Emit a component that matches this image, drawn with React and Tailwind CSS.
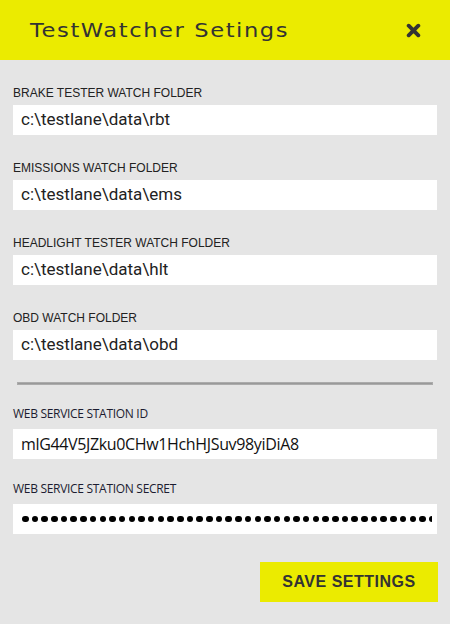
import React from "react";

const folders = [
  ["BRAKE TESTER WATCH FOLDER", "c:\\testlane\\data\\rbt"],
  ["EMISSIONS WATCH FOLDER", "c:\\testlane\\data\\ems"],
  ["HEADLIGHT TESTER WATCH FOLDER", "c:\\testlane\\data\\hlt"],
  ["OBD WATCH FOLDER", "c:\\testlane\\data\\obd"],
];

export default function App() {
  const dots = Array.from({ length: 48 });
  return (
    <div className="w-[450px] h-[624px] bg-[#e5e5e5] overflow-hidden">
      <div className="h-[60px] bg-[#ebeb00] flex items-center justify-between pl-[30px] pr-[29px]">
        <span
          className="text-[20px] tracking-[1.4px] text-[#333] leading-none origin-left scale-x-[1.13] inline-block"
          style={{ fontFamily: '"DejaVu Sans", sans-serif' }}
        >
          TestWatcher Setings
        </span>
        <svg width="15" height="15" viewBox="0 0 14 14" className="mt-[1px]">
          <path d="M2.5 2.5 L11.5 11.5 M11.5 2.5 L2.5 11.5" stroke="#333" strokeWidth="3.6" strokeLinecap="round" />
        </svg>
      </div>
      <div className="px-[13px] pt-[25px]">
        {folders.map(([label, value]) => (
          <div key={label} className="mb-[25px]">
            <div
              className="text-[12px] leading-[16px] text-[#222] mb-[4px]"
              style={{ fontFamily: '"Liberation Sans", Arial, sans-serif' }}
            >
              {label}
            </div>
            <div
              className="h-[30px] bg-white flex items-center pl-[8px] text-[17px] text-[#222]"
              style={{ fontFamily: 'Roboto, sans-serif' }}
            >
              {value}
            </div>
          </div>
        ))}
        <div className="mx-[4px] mt-[-3px] h-[3px] bg-[#999] border border-[#ababab]" />
        <div
          className="mt-[21px] text-[12px] leading-[16px] text-[#1c1c30] tracking-[-0.3px] mb-[7px]"
          style={{ fontFamily: '"Open Sans", sans-serif' }}
        >
          WEB SERVICE STATION ID
        </div>
        <div
          className="h-[30px] bg-white flex items-center pl-[8px] text-[16px] text-[#111] tracking-[-0.35px]"
          style={{ fontFamily: '"Open Sans", sans-serif' }}
        >
          mlG44V5JZku0CHw1HchHJSuv98yiDiA8
        </div>
        <div
          className="mt-[22px] text-[12px] leading-[16px] text-[#1c1c30] tracking-[-0.3px] mb-[7px]"
          style={{ fontFamily: '"Open Sans", sans-serif' }}
        >
          WEB SERVICE STATION SECRET
        </div>
        <div className="h-[30px] bg-white flex items-center pl-[9px] pr-[5px]">
          <div className="flex gap-[3.2px] overflow-hidden w-full">
            {dots.map((_, i) => (
              <div key={i} className="w-[6.5px] h-[6.5px] shrink-0 rounded-full bg-black" />
            ))}
          </div>
        </div>
        <div className="flex justify-end mt-[28px]">
          <button
            className="w-[178px] h-[40px] bg-[#ebeb00] text-[#333] font-bold text-[16px] tracking-[0.5px] mr-[-1px]"
            style={{ fontFamily: '"Liberation Sans", Arial, sans-serif' }}
          >
            SAVE SETTINGS
          </button>
        </div>
      </div>
    </div>
  );
}
